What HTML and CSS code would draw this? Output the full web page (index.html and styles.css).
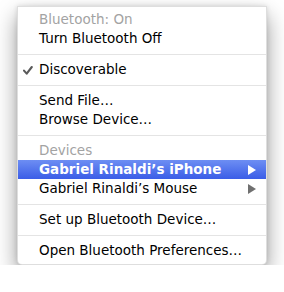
FILE: index.html
```html
<!DOCTYPE html>
<html>
<head>
<meta charset="utf-8">
<link rel="stylesheet" href="styles.css">
</head>
<body>
<div class="menu">
  <div class="item disabled">Bluetooth: On</div>
  <div class="item">Turn Bluetooth Off</div>
  <div class="sep"></div>
  <div class="item"><svg class="check" width="10" height="9" viewBox="0 0 10 9"><path d="M1 4.6 L3.7 7.6 L8.8 1" fill="none" stroke="#5a5a5a" stroke-width="2.1" stroke-linejoin="round" stroke-linecap="round"/></svg>Discoverable</div>
  <div class="sep"></div>
  <div class="item">Send File…</div>
  <div class="item">Browse Device…</div>
  <div class="sep"></div>
  <div class="item disabled">Devices</div>
  <div class="item selected bold"><span>Gabriel Rinaldi’s iPhone</span><svg class="arrow" width="8" height="10" viewBox="0 0 8 10"><path d="M0 0 L8 5 L0 10 Z"/></svg></div>
  <div class="item"><span>Gabriel Rinaldi’s Mouse</span><svg class="arrow" width="8" height="10" viewBox="0 0 8 10"><path d="M0 0 L8 5 L0 10 Z"/></svg></div>
  <div class="sep"></div>
  <div class="item">Set up Bluetooth Device…</div>
  <div class="sep"></div>
  <div class="item">Open Bluetooth Preferences…</div>
</div>
</body>
</html>
```
FILE: styles.css
```css
html, body {
  margin: 0;
  padding: 0;
  background: #ffffff;
}
body {
  padding: 6px 0 0 17px;
}
.menu {
  width: 250px;
  height: 259px;
  box-sizing: border-box;
  background: #ffffff;
  border: 1px solid rgba(0,0,0,0.13);
  border-radius: 0 0 5px 5px;
  box-shadow: 0 10px 22px rgba(0,0,0,0.40), 0 0 5px rgba(0,0,0,0.12);
  padding: 3px 0 4px 0;
  display: flex;
  flex-direction: column;
  font-family: "DejaVu Sans", sans-serif;
  font-size: 13.5px;
  color: #000;
}
.item {
  height: 19px;
  line-height: 19px;
  padding: 0 10px 0 21px;
  display: flex;
  align-items: center;
  justify-content: space-between;
  position: relative;
  white-space: nowrap;
}
.disabled {
  color: #a3a3a3;
}
.bold {
  font-weight: bold;
}
.selected {
  color: #fff;
  background: linear-gradient(#6d8ef3, #3b5de7);
}
.sep {
  height: 12px;
  display: flex;
  align-items: center;
}
.sep::before {
  content: "";
  display: block;
  width: 100%;
  height: 1px;
  background: #e4e4e4;
}
.check {
  position: absolute;
  left: 5px;
  top: 6px;
}
.arrow {
  fill: #707070;
}
.selected .arrow {
  fill: #ffffff;
}
```
